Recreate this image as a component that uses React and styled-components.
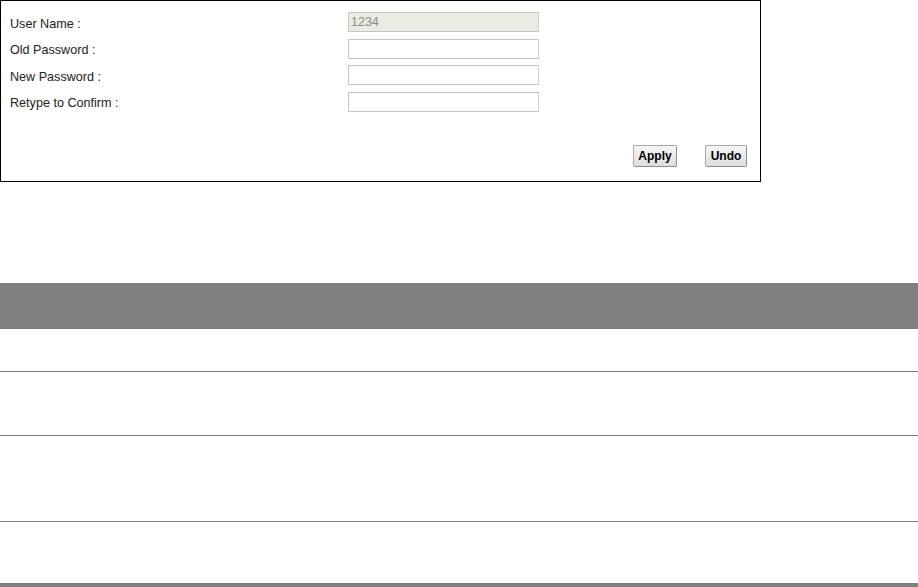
import { Fragment } from "react";
import styled, { createGlobalStyle } from "styled-components";

const GlobalStyle = createGlobalStyle`
  body {
    margin: 0;
    background: #ffffff;
    font-family: "Liberation Sans", Arial, sans-serif;
  }
`;

const Page = styled.div`
  width: 918px;
`;

const Frame = styled.div`
  box-sizing: border-box;
  width: 761px;
  height: 182px;
  border: 1px solid #000000;
  padding: 11px 13px 0 9px;
  display: flex;
  flex-direction: column;
`;

const Fields = styled.div`
  display: grid;
  grid-template-columns: 338px 191px;
  grid-auto-rows: 20px;
  row-gap: 6.5px;
  align-items: center;
`;

const Label = styled.label`
  font-size: 12.6px;
  color: #222222;
  padding-top: 3px;
`;

const Input = styled.input`
  width: 191px;
  height: 20px;
  box-sizing: border-box;
  margin: 0;
  border: 1px solid #c4c4c4;
  border-right-color: #d0d0d0;
  background: ${(p) => (p.disabled ? "#ebebe4" : "#ffffff")};
  color: #8a8a8a;
  font-family: "Liberation Sans", Arial, sans-serif;
  font-size: 12.5px;
  padding: 0 2px;
`;

const Actions = styled.div`
  display: flex;
  justify-content: flex-end;
  gap: 28px;
  margin-top: 33px;
`;

const Button = styled.button`
  height: 22px;
  padding: 0 3px;
  min-width: ${(p) => p.w}px;
  box-sizing: border-box;
  border: 1px solid #a8a8a8;
  border-bottom-color: #8c8c8c;
  border-right-color: #8c8c8c;
  border-radius: 2px;
  background: linear-gradient(#f6f6f6, #dedede);
  font-family: "Liberation Sans", Arial, sans-serif;
  font-weight: bold;
  font-size: 12px;
  color: #000000;
`;

const Table = styled.div`
  margin-top: 101px;
  width: 918px;
  border-bottom: 4px solid #808080;
`;

const Head = styled.div`
  height: 46px;
  background: #808080;
`;

const Row = styled.div`
  height: ${(p) => p.h}px;
  border-bottom: ${(p) => (p.$last ? "none" : "1px solid #808080")};
`;

const fields = [
  { label: "User Name :", value: "1234", disabled: true },
  { label: "Old Password :", value: "" },
  { label: "New Password :", value: "" },
  { label: "Retype to Confirm :", value: "" },
];

const rows = [42, 63, 85, 61];

export default function App() {
  return (
    <Page>
      <GlobalStyle />
      <Frame>
        <Fields>
          {fields.map((f) => (
            <Fragment key={f.label}>
              <Label>{f.label}</Label>
              <Input
                type={f.disabled ? "text" : "password"}
                defaultValue={f.value}
                disabled={f.disabled}
              />
            </Fragment>
          ))}
        </Fields>
        <Actions>
          <Button w={44}>Apply</Button>
          <Button w={42}>Undo</Button>
        </Actions>
      </Frame>
      <Table>
        <Head />
        {rows.map((h, i) => (
          <Row key={i} h={h} $last={i === rows.length - 1} />
        ))}
      </Table>
    </Page>
  );
}
